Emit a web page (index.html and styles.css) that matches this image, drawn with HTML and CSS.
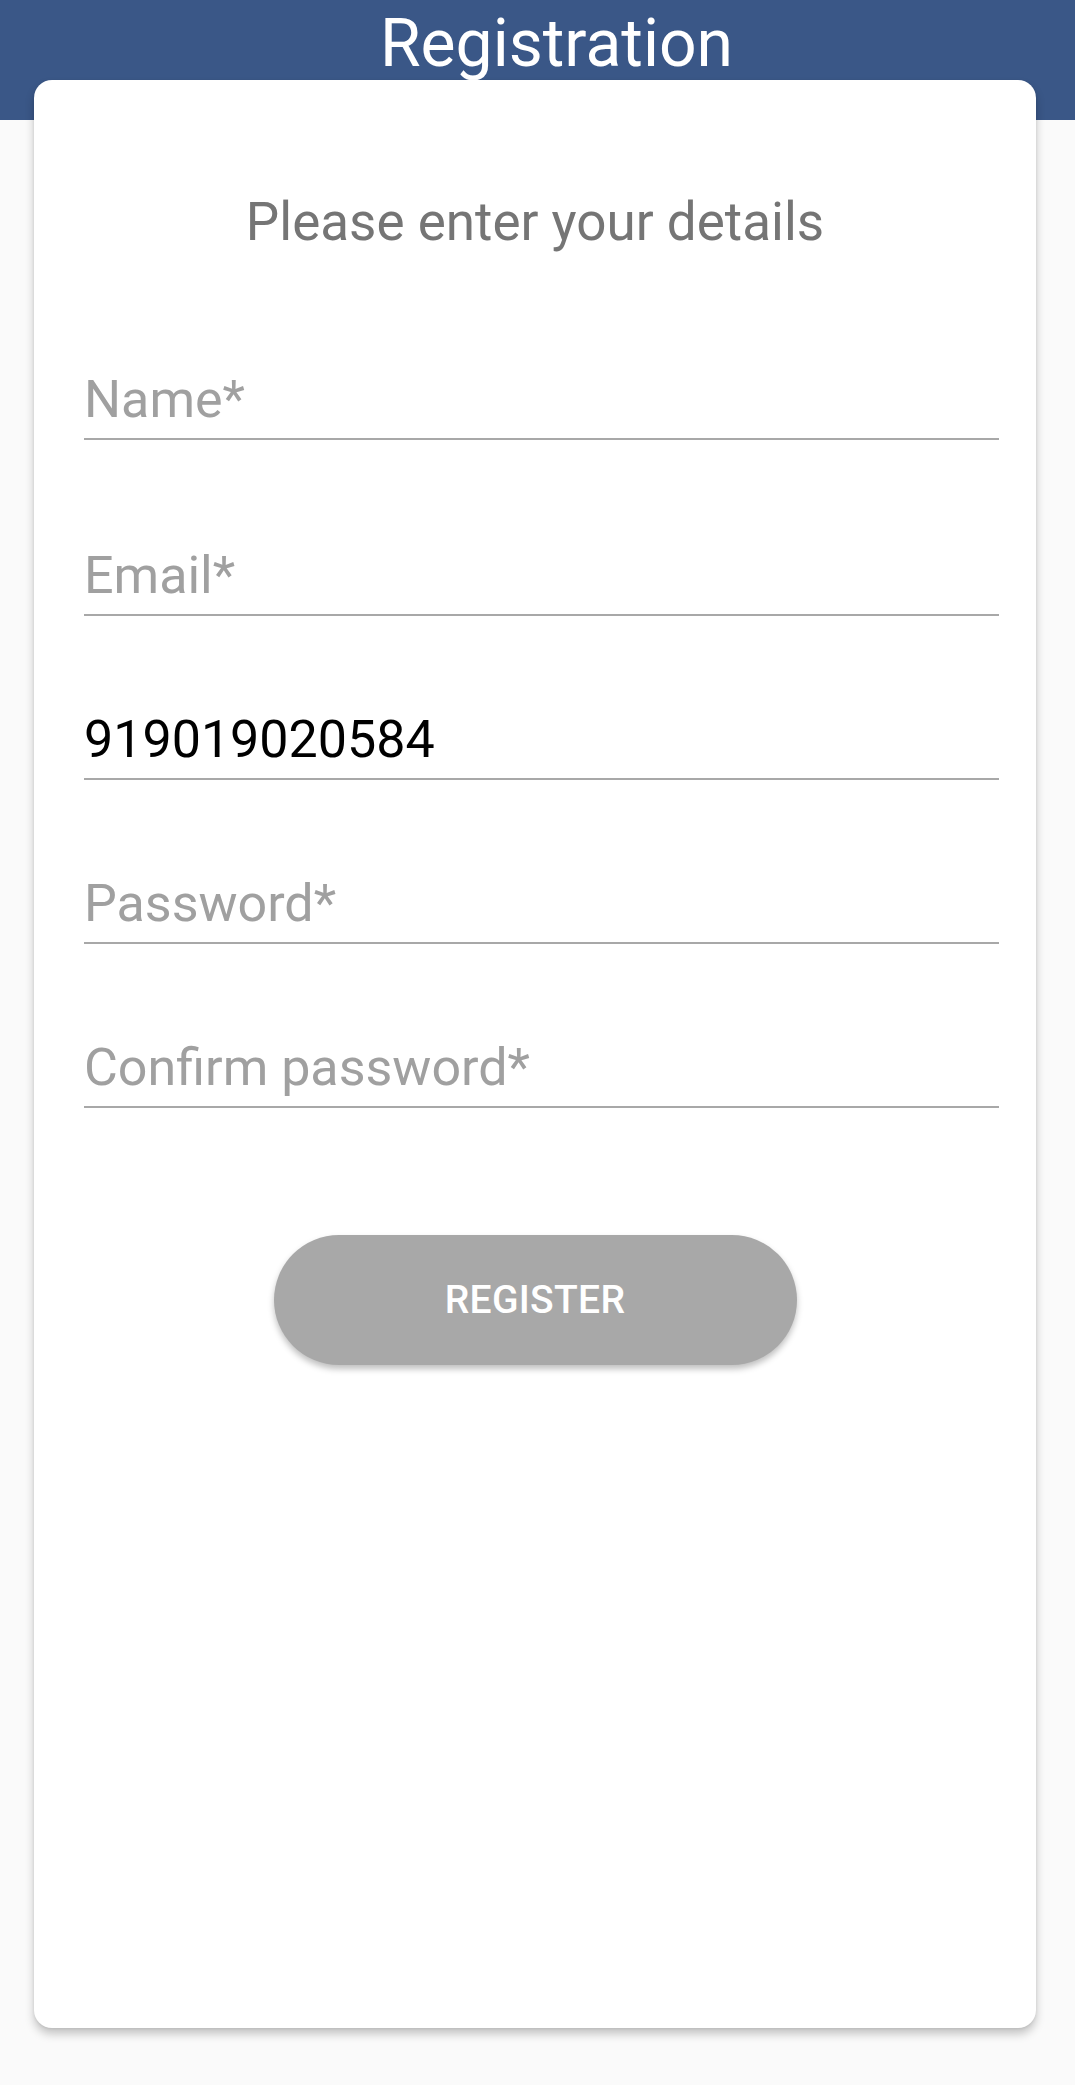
FILE: index.html
```html
<!DOCTYPE html>
<html>
<head>
<meta charset="utf-8">
<link rel="stylesheet" href="styles.css">
</head>
<body>
<header class="topbar">
  <h1 class="title">Registration</h1>
</header>
<main class="card">
  <p class="subtitle">Please enter your details</p>
  <div class="field field-name"><span class="hint">Name*</span></div>
  <div class="field field-email"><span class="hint">Email*</span></div>
  <div class="field"><span class="value">919019020584</span></div>
  <div class="field"><span class="hint">Password*</span></div>
  <div class="field"><span class="hint">Confirm password*</span></div>
  <div class="actions">
    <button class="btn">REGISTER</button>
  </div>
</main>
</body>
</html>
```

FILE: styles.css
```css
html, body {
  margin: 0;
  padding: 0;
}
body {
  background: #fafafa;
  font-family: Roboto, "Noto Sans", sans-serif;
  width: 1075px;
  height: 2085px;
  overflow: hidden;
}
.topbar {
  background: #3a5787;
  height: 120px;
  box-sizing: border-box;
  padding-top: 9px;
  padding-left: 38px;
  text-align: center;
}
.title {
  margin: 0;
  font-size: 66px;
  line-height: 70px;
  font-weight: 400;
  color: #ffffff;
}
.card {
  position: relative;
  margin: -40px 39px 0 34px;
  height: 1948px;
  box-sizing: border-box;
  background: #ffffff;
  border-radius: 18px;
  box-shadow: 0 6px 10px rgba(0, 0, 0, 0.22), 0 1px 3px rgba(0, 0, 0, 0.08);
  padding-top: 111px;
  display: flex;
  flex-direction: column;
}
.subtitle {
  margin: 0;
  text-align: center;
  font-size: 53px;
  line-height: 62px;
  color: #757575;
}
.field {
  margin: 94px 37px 0 50px;
  font-size: 52px;
  line-height: 60px;
  padding-bottom: 8px;
  border-bottom: 2px solid #a8a8a8;
}
.field-name {
  margin-top: 117px;
}
.field-email {
  margin-top: 106px;
}
.hint {
  color: #a0a0a0;
}
.value {
  color: #000000;
}
.actions {
  margin-top: 127px;
  display: flex;
  justify-content: center;
}
.btn {
  width: 523px;
  height: 130px;
  border: none;
  border-radius: 65px;
  background: #a8a8a8;
  color: #ffffff;
  font-family: Roboto, "Noto Sans", sans-serif;
  font-size: 39px;
  font-weight: 500;
  letter-spacing: 0.3px;
  box-shadow: 0 4px 6px rgba(0, 0, 0, 0.25);
  padding: 0;
}
```
